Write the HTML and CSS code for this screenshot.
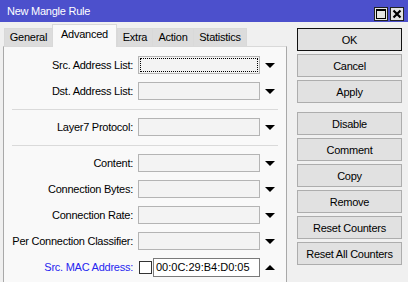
FILE: index.html
```html
<!DOCTYPE html>
<html lang="en">
<head>
    <meta charset="UTF-8">
    <meta name="viewport" content="width=device-width, initial-scale=1.0">
    <title>New Mangle Rule</title>
    <link rel="stylesheet" href="styles.css">
</head>
<body>
    <!-- Window title -->
    <header class="titlebar">
        <span class="title">New Mangle Rule</span>
        <div class="title-buttons">
            <span class="tb-btn">
                <svg width="12" height="12" viewBox="0 0 12 12"><rect x="1.5" y="1.5" width="9" height="9" fill="none" stroke="#000" stroke-width="1"/><line x1="1" y1="2" x2="11" y2="2" stroke="#000" stroke-width="2"/></svg>
            </span>
            <span class="tb-btn">
                <svg width="12" height="12" viewBox="0 0 12 12"><path d="M2.5 2.5 L9.5 9.5 M9.5 2.5 L2.5 9.5" stroke="#000" stroke-width="2.2"/></svg>
            </span>
        </div>
    </header>

    <div class="window">
        <!-- Tabs and fields -->
        <div class="left">
            <ul class="tabs">
                <li class="tab tab-general">General</li>
                <li class="tab tab-advanced active">Advanced</li>
                <li class="tab tab-extra">Extra</li>
                <li class="tab tab-action">Action</li>
                <li class="tab tab-stats">Statistics</li>
            </ul>
            <div class="panel">
                <div class="row">
                    <label class="label">Src. Address List:</label>
                    <input class="field focused" type="text" readonly>
                    <span class="arrow down"></span>
                </div>
                <div class="row">
                    <label class="label">Dst. Address List:</label>
                    <input class="field" type="text" readonly>
                    <span class="arrow down"></span>
                </div>
                <div class="sep"></div>
                <div class="row">
                    <label class="label">Layer7 Protocol:</label>
                    <input class="field" type="text" readonly>
                    <span class="arrow down"></span>
                </div>
                <div class="sep"></div>
                <div class="row">
                    <label class="label">Content:</label>
                    <input class="field" type="text" readonly>
                    <span class="arrow down"></span>
                </div>
                <div class="row">
                    <label class="label">Connection Bytes:</label>
                    <input class="field" type="text" readonly>
                    <span class="arrow down"></span>
                </div>
                <div class="row">
                    <label class="label">Connection Rate:</label>
                    <input class="field" type="text" readonly>
                    <span class="arrow down"></span>
                </div>
                <div class="row">
                    <label class="label">Per Connection Classifier:</label>
                    <input class="field" type="text" readonly>
                    <span class="arrow down"></span>
                </div>
                <div class="row">
                    <label class="label label-active">Src. MAC Address:</label>
                    <span class="check"></span>
                    <input class="field field-mac" type="text" value="00:0C:29:B4:D0:05" readonly>
                    <span class="arrow up"></span>
                </div>
            </div>
        </div>

        <!-- Buttons -->
        <div class="buttons">
            <button class="btn btn-default">OK</button>
            <button class="btn">Cancel</button>
            <button class="btn">Apply</button>
            <button class="btn btn-gap">Disable</button>
            <button class="btn">Comment</button>
            <button class="btn">Copy</button>
            <button class="btn">Remove</button>
            <button class="btn">Reset Counters</button>
            <button class="btn">Reset All Counters</button>
        </div>
    </div>
</body>
</html>
```

FILE: styles.css
```css
body {
    font-family: "Liberation Sans", Arial, sans-serif;
    font-size: 11px;
    letter-spacing: -0.25px;
    margin: 0;
    padding: 0;
    width: 408px;
    height: 282px;
    overflow: hidden;
    background-color: #f0f0f0;
    color: #000;
}

.titlebar {
    height: 22px;
    background-color: #4c50cc;
    color: #fff;
    display: flex;
    justify-content: space-between;
    padding: 0 4px 0 7px;
    box-sizing: border-box;
}

.title {
    padding-top: 5px;
    line-height: 13px;
}

.title-buttons {
    display: flex;
    gap: 2px;
    padding-top: 7px;
}

.tb-btn {
    width: 14px;
    height: 14px;
    box-sizing: border-box;
    border: 1px solid #222;
    background-color: #e4e4e4;
    display: flex;
    align-items: center;
    justify-content: center;
}

.tb-btn svg {
    display: block;
}

.window {
    display: flex;
    padding-left: 3px;
}

.left {
    width: 284px;
    display: flex;
    flex-direction: column;
}

.tabs {
    list-style: none;
    margin: 2px 0 0 0;
    padding: 0 0 0 1px;
    height: 22px;
    display: flex;
    align-items: flex-end;
    position: relative;
    z-index: 1;
}

.tab {
    height: 18px;
    box-sizing: border-box;
    border: 1px solid #d9d9d9;
    border-bottom: none;
    border-right: none;
    background-color: #dcdcdc;
    text-align: center;
    line-height: 17px;
}

.tab.active {
    height: 23px;
    margin-bottom: -1px;
    background-color: #f9f9f9;
    border-right: 1px solid #d9d9d9;
    line-height: 19px;
}

.tab-general { width: 48px; }
.tab-advanced { width: 65px; }
.tab-extra { width: 35px; }
.tab-action { width: 41px; }
.tab-stats { width: 54px; border-right: 1px solid #d9d9d9; }

.panel {
    height: 236px;
    box-sizing: border-box;
    background-color: #f9f9f9;
    border: 1px solid #a9a9a9;
    border-top-color: #d9d9d9;
    border-bottom: none;
    padding-top: 5px;
}

.row {
    display: flex;
    align-items: center;
    height: 26px;
}

.label {
    width: 129px;
    margin-right: 5px;
    text-align: right;
    white-space: nowrap;
}

.label-active {
    color: #2626f0;
}

.field {
    width: 122px;
    height: 18px;
    box-sizing: border-box;
    margin: 0;
    padding: 0 2px;
    border: 1px solid #b4b4b4;
    background-color: #f3f3f3;
    font: inherit;
    letter-spacing: inherit;
    color: #000;
    outline: none;
}

.field.focused {
    outline: 1px dotted #000;
    outline-offset: -3px;
}

.field-mac {
    width: 107px;
    height: 19px;
    margin-left: 1px;
    background-color: #fff;
    border-color: #7a7a7a;
    letter-spacing: 0;
}

.check {
    width: 13px;
    height: 13px;
    box-sizing: border-box;
    margin-left: 1px;
    border: 1px solid #333;
    background-color: #fff;
}

.arrow {
    width: 0;
    height: 0;
    margin-left: 5px;
    border-left: 5px solid transparent;
    border-right: 5px solid transparent;
}

.arrow.down {
    border-top: 5px solid #000;
}

.arrow.up {
    border-bottom: 5px solid #000;
}

.sep {
    height: 1px;
    margin: 5px 8px 4px;
    background-color: #dadada;
}

.buttons {
    display: flex;
    flex-direction: column;
    gap: 3px;
    margin-left: 10px;
    padding-top: 6px;
}

.btn {
    width: 105px;
    height: 23px;
    box-sizing: border-box;
    margin: 0;
    padding: 0;
    border: 1px solid #adadad;
    background-color: #e1e1e1;
    font: inherit;
    letter-spacing: inherit;
    color: #000;
    text-align: center;
}

.btn-default {
    border-color: #111;
}

.btn-gap {
    margin-top: 6px;
}
```
